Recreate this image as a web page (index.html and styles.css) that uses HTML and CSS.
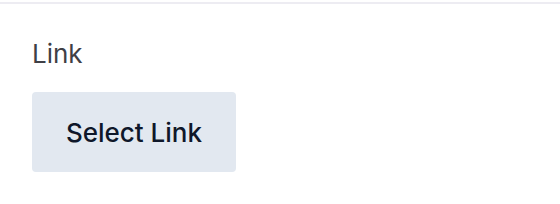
FILE: index.html
```html
<!DOCTYPE html>
<html lang="en">
<head>
    <meta charset="UTF-8">
    <title>Link field</title>
    <link rel="stylesheet" href="styles.css">
</head>
<body>
    <div class="divider"></div>
    <div class="field">
        <label class="field-label" for="link-btn">Link</label>
        <button id="link-btn" class="select-btn">Select Link</button>
    </div>
</body>
</html>
```

FILE: styles.css
```css
:root {
    --line: #edecf2; --label: #3f3f46; --btn-bg: #e2e8f0; --btn-text: #0f172a;
}
body {
    margin: 0; background: #fff;
    font-family: Inter, "Noto Sans", Arial, sans-serif;
}
.divider { height: 2px; margin-top: 2px; background: var(--line); }
.field { display: flex; flex-direction: column; align-items: flex-start; gap: 23px; padding: 35px 32px; }
.field-label { font-size: 26px; line-height: 30px; color: var(--label); }
.select-btn {
    width: 204px; height: 80px; border: none; border-radius: 4px;
    background: var(--btn-bg); color: var(--btn-text);
    font-family: inherit; font-size: 26px; font-weight: 500; cursor: pointer;
}
```
